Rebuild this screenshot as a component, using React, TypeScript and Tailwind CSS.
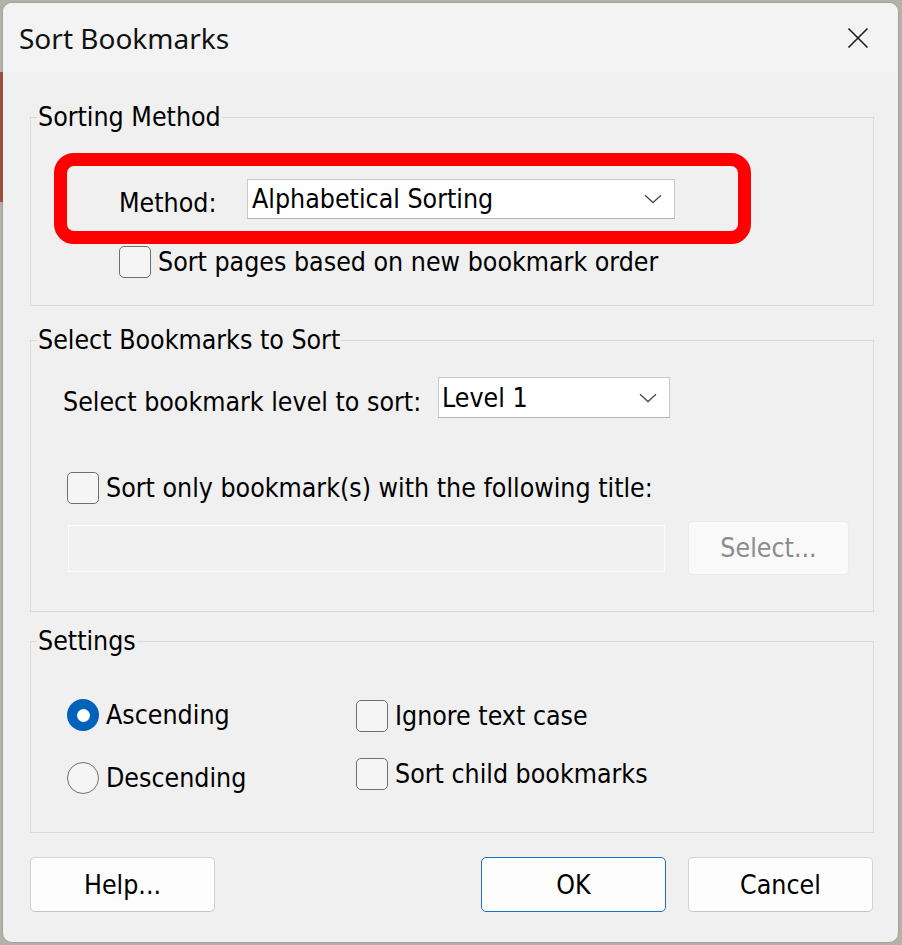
import React from "react";

function Chevron() {
  return (
    <svg width="18" height="10" viewBox="0 0 18 10" className="shrink-0">
      <polyline points="1,1.2 9,8.6 17,1.2" fill="none" stroke="#4a4a4a" strokeWidth="1.3" />
    </svg>
  );
}

function Checkbox() {
  return <span className="block h-[32px] w-[32px] shrink-0 rounded-[5px] border-[1.5px] border-[#6f6f6f] bg-[#f5f5f5]" />;
}

function Radio({ checked }: { checked?: boolean }) {
  if (checked) {
    return (
      <span className="flex h-[32px] w-[32px] shrink-0 items-center justify-center rounded-full bg-[#0062b8]">
        <span className="block h-[13px] w-[13px] rounded-full bg-white" />
      </span>
    );
  }
  return <span className="block h-[32px] w-[32px] shrink-0 rounded-full border-[1.5px] border-[#6f6f6f] bg-[#f5f5f5]" />;
}

function Button({ label, primary }: { label: string; primary?: boolean }) {
  return (
    <div
      className={
        "flex h-[55px] w-[185px] items-center justify-center rounded-[5px] border bg-[#fdfdfd] " +
        (primary ? "border-[#1a73c8]" : "border-[#d2d2d2] border-b-[#c4c4c4]")
      }
    >
      {label}
    </div>
  );
}

export default function App() {
  return (
    <div className="relative h-[945px] w-[902px] overflow-hidden bg-[#b3b2a9] pl-[2px] pt-[2px] font-['DejaVu_Sans_Condensed','DejaVu_Sans',sans-serif] text-[26.5px] leading-[30px] text-black">
      <div className="absolute left-0 top-[72px] h-[130px] w-[3px] bg-[#9b4f41]" />
      <div className="flex h-[941px] w-[897px] flex-col overflow-hidden rounded-[10px] border border-[#a2a29c] bg-[#f0f0f0]">
        {/* Title bar */}
        <div className="flex h-[69px] shrink-0 items-center justify-between bg-[#f3f3f3] pl-[16px] pr-[29px]">
          <span className="font-['Noto_Sans',sans-serif] text-[28px] leading-[34px] text-[#111]">Sort Bookmarks</span>
          <svg width="22" height="22" viewBox="0 0 22 22">
            <path d="M1.5 1.5 L20.5 20.5 M20.5 1.5 L1.5 20.5" stroke="#1b1b1b" strokeWidth="1.6" fill="none" />
          </svg>
        </div>

        {/* Body */}
        <div className="flex flex-col pl-[27px]">
          {/* Sorting Method */}
          <fieldset className="mt-[30px] w-[844px] border border-[#dadada] pb-[27px]">
            <legend className="ml-[6px] px-[1px] leading-[30px]">Sorting Method</legend>
            <div className="relative ml-[88px] mt-[47px] flex h-[40px] items-center">
              <div className="pointer-events-none absolute left-[-65px] top-[-26px] h-[91px] w-[697px] rounded-[20px] border-[13px] border-[#ff0000]" />
              <span className="w-[128px] shrink-0 pt-[8px]">Method:</span>
              <div className="flex h-[40px] w-[428px] items-center justify-between border border-[#c9c9c9] border-b-[#b5b5b5] bg-white pl-[4px] pr-[12px]">
                <span>Alphabetical Sorting</span>
                <Chevron />
              </div>
            </div>
            <div className="ml-[88px] mt-[27px] flex items-center gap-[7px]">
              <Checkbox />
              <span>Sort pages based on new bookmark order</span>
            </div>
          </fieldset>

          {/* Select Bookmarks to Sort */}
          <fieldset className="mt-[19px] w-[844px] border border-[#dadada] pb-[36px]">
            <legend className="ml-[6px] px-[1px] leading-[30px]">Select Bookmarks to Sort</legend>
            <div className="ml-[32px] mt-[22px] flex h-[41px] items-center">
              <span className="w-[375px] shrink-0 pt-[8px]">Select bookmark level to sort:</span>
              <div className="flex h-[41px] w-[232px] items-center justify-between border border-[#c9c9c9] border-b-[#b5b5b5] bg-white pl-[3px] pr-[12px]">
                <span>Level 1</span>
                <Chevron />
              </div>
            </div>
            <div className="ml-[36px] mt-[54px] flex items-center gap-[7px]">
              <Checkbox />
              <span>Sort only bookmark(s) with the following title:</span>
            </div>
            <div className="ml-[37px] mt-[17px] flex h-[54px] items-center gap-[23px]">
              <div className="h-[47px] w-[597px] border border-[#fbfbfb] bg-[#f0f0f0]" />
              <div className="flex h-[54px] w-[161px] items-center justify-center rounded-[4px] border border-[#ebebeb] bg-[#f9f9f9] text-[#8c8c8c]">
                Select...
              </div>
            </div>
          </fieldset>

          {/* Settings */}
          <fieldset className="mt-[14px] w-[844px] border border-[#dadada] pb-[38px]">
            <legend className="ml-[6px] px-[1px] leading-[30px]">Settings</legend>
            <div className="ml-[36px] mt-[43px] flex">
              <div className="flex w-[289px] flex-col gap-[31px]">
                <div className="flex items-center gap-[7px]">
                  <Radio checked />
                  <span>Ascending</span>
                </div>
                <div className="flex items-center gap-[7px]">
                  <Radio />
                  <span>Descending</span>
                </div>
              </div>
              <div className="mt-[1px] flex flex-col gap-[26px]">
                <div className="flex items-center gap-[7px]">
                  <Checkbox />
                  <span>Ignore text case</span>
                </div>
                <div className="flex items-center gap-[7px]">
                  <Checkbox />
                  <span>Sort child bookmarks</span>
                </div>
              </div>
            </div>
          </fieldset>

          {/* Buttons */}
          <div className="mt-[24px] flex w-[843px] items-center">
            <Button label="Help..." />
            <div className="ml-auto flex gap-[22px]">
              <Button label="OK" primary />
              <Button label="Cancel" />
            </div>
          </div>
        </div>
      </div>
    </div>
  );
}
